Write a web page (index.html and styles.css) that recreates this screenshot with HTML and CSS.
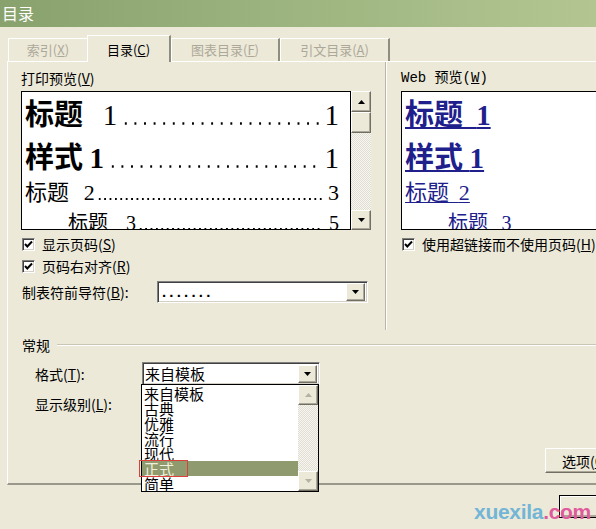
FILE: index.html
```html
<!DOCTYPE html>
<html lang="zh-CN">
<head>
<meta charset="utf-8">
<title>目录</title>
<link rel="stylesheet" href="styles.css">
</head>
<body>
<div class="titlebar">目录</div>
<div class="tabs">
  <div class="tab tab-off w1">索引(<u>X</u>)</div>
  <div class="tab tab-on">目录(<u>C</u>)</div>
  <div class="tab tab-off w3">图表目录(<u>F</u>)</div>
  <div class="tab tab-off w4">引文目录(<u>A</u>)</div>
</div>
<div class="panel">
  <div class="top">
    <div class="col-left">
      <div class="label">打印预览(<u>V</u>)</div>
      <div class="preview-row">
        <div class="preview">
          <div class="trow r1"><span class="h bold">标题&nbsp;&nbsp;&nbsp;<span class="num">1</span></span><span class="dots wide"></span><span class="pg">1</span></div>
          <div class="trow r2"><span class="h bold">样式&nbsp;<span class="num">1</span></span><span class="dots wide"></span><span class="pg">1</span></div>
          <div class="trow r3"><span class="h">标题&nbsp;&nbsp;&nbsp;<span class="num">2</span></span><span class="dots fine"></span><span class="pg">3</span></div>
          <div class="trow r4"><span class="h">标题&nbsp;&nbsp;&nbsp;&nbsp;<span class="num">3</span></span><span class="dots fine"></span><span class="pg">5</span></div>
        </div>
        <div class="vscroll">
          <div class="sbtn"><svg width="7" height="4" viewBox="0 0 7 4"><polygon points="0,4 7,4 3.5,0" fill="#000"/></svg></div>
          <div class="sthumb"></div>
          <div class="strack"></div>
          <div class="sbtn"><svg width="7" height="4" viewBox="0 0 7 4"><polygon points="0,0 7,0 3.5,4" fill="#000"/></svg></div>
        </div>
      </div>
      <div class="checks">
        <div class="check"><span class="box"><svg width="11" height="11" viewBox="0 0 11 11"><polyline points="2,5 4.3,7.5 9,2.5" fill="none" stroke="#000" stroke-width="2"/></svg></span><span class="ctext">显示页码(<u>S</u>)</span></div>
        <div class="check"><span class="box"><svg width="11" height="11" viewBox="0 0 11 11"><polyline points="2,5 4.3,7.5 9,2.5" fill="none" stroke="#000" stroke-width="2"/></svg></span><span class="ctext">页码右对齐(<u>R</u>)</span></div>
      </div>
      <div class="field-row">
        <span class="field-label">制表符前导符(<u>B</u>):</span>
        <div class="combo leader">
          <span class="ctext-val leader-dots">.......</span>
          <span class="dropbtn"><svg width="7" height="4" viewBox="0 0 7 4"><polygon points="0,0 7,0 3.5,4" fill="#000"/></svg></span>
        </div>
      </div>
    </div>
    <div class="vsep"></div>
    <div class="col-right">
      <div class="label mono">Web 预览(<u>W</u>)</div>
      <div class="preview web">
        <div class="wrow r1"><a class="wl bold">标题&nbsp;&nbsp;<span class="num">1</span></a></div>
        <div class="wrow r2"><a class="wl bold">样式&nbsp;<span class="num">1</span></a></div>
        <div class="wrow r3"><a class="wl">标题&nbsp;&nbsp;<span class="num">2</span></a></div>
        <div class="wrow r4"><a class="wl">标题&nbsp;&nbsp;&nbsp;<span class="num">3</span></a></div>
      </div>
      <div class="checks">
        <div class="check"><span class="box"><svg width="11" height="11" viewBox="0 0 11 11"><polyline points="2,5 4.3,7.5 9,2.5" fill="none" stroke="#000" stroke-width="2"/></svg></span><span class="ctext nowrap">使用超链接而不使用页码(<u>H</u>)</span></div>
      </div>
    </div>
  </div>
  <div class="group">
    <div class="group-head"><span class="gtitle">常规</span><span class="etch"></span></div>
    <div class="g-row">
      <span class="g-label">格式(<u>T</u>):</span>
      <div class="combo fmt">
        <span class="ctext-val">来自模板</span>
        <span class="dropbtn"><svg width="7" height="4" viewBox="0 0 7 4"><polygon points="0,0 7,0 3.5,4" fill="#000"/></svg></span>
        <div class="dropdown">
          <div class="items">
            <div class="item">来自模板</div>
            <div class="item">古典</div>
            <div class="item">优雅</div>
            <div class="item">流行</div>
            <div class="item">现代</div>
            <div class="item sel">正式<span class="mark"></span></div>
            <div class="item">简单</div>
          </div>
          <div class="vscroll small">
            <div class="sbtn"><svg width="7" height="4" viewBox="0 0 7 4"><polygon points="0,4 7,4 3.5,0" fill="#b5b2a4"/></svg></div>
            <div class="strack"></div>
            <div class="sbtn"><svg width="7" height="4" viewBox="0 0 7 4"><polygon points="0,0 7,0 3.5,4" fill="#b5b2a4"/></svg></div>
          </div>
        </div>
      </div>
    </div>
    <div class="g-row">
      <span class="g-label">显示级别(<u>L</u>):</span>
    </div>
    <div class="opt-row"><button class="btn opt">选项(<u>O</u>)...</button></div>
  </div>
</div>
<div class="bottom-row"><button class="btn default">确定</button></div>
<div class="watermark">xuexila<span class="com">.com</span></div>
</body>
</html>
```

FILE: styles.css
```css
* { box-sizing: border-box; }
html, body { margin: 0; padding: 0; }
body {
  width: 596px;
  height: 529px;
  overflow: hidden;
  position: relative;
  background: #ece9d8;
  font-family: "Noto Sans CJK SC", sans-serif;
  font-size: 14px;
  color: #000;
}
u { text-decoration: underline; text-underline-offset: 1px; }

.titlebar {
  height: 27px;
  background: linear-gradient(90deg, #89a26d 0%, #9bb37e 45%, #b3c692 100%);
  color: #fff;
  font-size: 16px;
  line-height: 27px;
  padding-left: 2px;
}

.tabs {
  display: flex;
  align-items: flex-end;
  height: 34px;
  padding-left: 8px;
}
.tab {
  height: 23px;
  border-top: 1px solid #fff;
  border-left: 1px solid #fff;
  border-right: 2px solid #8f8d7f;
  font-size: 13px;
  line-height: 22px;
  text-align: center;
  white-space: nowrap;
}
.tab-off { color: #aca899; }
.w1 { width: 79px; border-right: none; }
.w3 { width: 109px; }
.w4 { width: 110px; }
.tab-on {
  position: relative;
  z-index: 1;
  width: 84px;
  height: 27px;
  margin-bottom: -1px;
  background: #ece9d8;
  padding-top: 2px;
  line-height: 24px;
}

.panel {
  margin-left: 7px;
  width: 640px;
  height: 424px;
  border-top: 1px solid #fff;
  border-left: 1px solid #fff;
  border-bottom: 2px solid #9a988a;
  padding: 8px 0 0 13px;
}

.top { display: flex; height: 260px; }
.col-left { width: 351px; }
.label { height: 21px; line-height: 16px; white-space: nowrap; }
.mono { font-family: "Liberation Mono", "Noto Sans CJK SC", monospace; }

.preview-row { display: flex; height: 139px; }
.preview {
  width: 330px;
  height: 139px;
  background: #fff;
  border: 1px solid #000;
  overflow: hidden;
  padding: 0 11px 0 3px;
}
.preview.web { width: 230px; }

.trow { display: flex; align-items: baseline; white-space: nowrap; }
.wrow { white-space: nowrap; }
.r1 { height: 41px; line-height: 41px; font-size: 29px; }
.r2 { height: 44px; line-height: 44px; font-size: 29px; }
.r3 { height: 27px; line-height: 27px; font-size: 22px; }
.r4 { height: 36px; line-height: 36px; font-size: 20px; padding-left: 43px; }
.bold { font-weight: 700; }
.num, .pg { font-family: "Liberation Serif", serif; }
.r1 .h .num { font-weight: 400; }
.pg { font-weight: 400; }
.dots { flex: 1; height: 3px; margin: 0 6px 0 4px; }
.dots.wide { background: radial-gradient(circle, #000 0 1px, transparent 1.4px) left bottom / 9.6px 3px repeat-x; }
.dots.fine { background: radial-gradient(circle, #000 0 0.8px, transparent 1.2px) left bottom / 5.4px 2px repeat-x; height: 2px; margin-left: 2px; }

.wl { color: #20208c; text-decoration: underline; text-decoration-thickness: 1.5px; text-underline-offset: 2px; }
.r3 .wl, .r4 .wl { text-decoration-thickness: 1px; }

.vscroll { width: 20px; display: flex; flex-direction: column; }
.sbtn, .sthumb, .dropbtn {
  background: #ece9d8;
  border: 1px solid;
  border-color: #fff #716f64 #716f64 #fff;
  box-shadow: inset -1px -1px 0 #aca899;
}
.sbtn { height: 21px; display: flex; align-items: center; justify-content: center; }
.sbtn:last-child { height: 20px; }
.sthumb { height: 21px; }
.strack {
  flex: 1;
  background: repeating-conic-gradient(#f6f5ef 0 25%, #e1dfd3 0 50%) 0 0 / 2px 2px;
}

.checks { margin-top: 3px; }
.check { display: flex; align-items: center; height: 22px; padding-left: 1px; }
.box {
  width: 13px;
  height: 13px;
  background: #fff;
  border: 1px solid;
  border-color: #7f7f7f #fff #fff #7f7f7f;
  box-shadow: inset 1px 1px 0 #404040, inset -1px -1px 0 #d4d0c8;
  display: flex;
  align-items: center;
  justify-content: center;
}
.ctext { margin-left: 7px; line-height: 16px; }
.nowrap { white-space: nowrap; }

.field-row { display: flex; align-items: center; height: 22px; margin-top: 4px; }
.field-label { width: 136px; padding-left: 1px; white-space: nowrap; }

.combo {
  position: relative;
  display: flex;
  align-items: center;
  background: #fff;
  border: 1px solid;
  border-color: #808080 #fff #fff #808080;
  box-shadow: inset 1px 1px 0 #404040, inset -1px -1px 0 #d4d0c8;
}
.combo.leader { width: 211px; height: 22px; }
.combo.fmt { width: 178px; height: 23px; }
.ctext-val { flex: 1; padding-left: 3px; white-space: nowrap; }
.fmt .ctext-val { font-size: 15px; padding-left: 2px; }
.leader-dots { font-family: "Liberation Sans", sans-serif; font-weight: 700; font-size: 15px; letter-spacing: 3.2px; padding-left: 4px; line-height: 14px; }
.dropbtn {
  width: 19px;
  height: 18px;
  margin-right: 2px;
  display: flex;
  align-items: center;
  justify-content: center;
}

.vsep {
  width: 2px;
  margin: -8px 0 0 13px;
  border-left: 1px solid #b9b6a6;
  border-right: 1px solid #fff;
}
.col-right { margin-left: 14px; }

.group-head { display: flex; align-items: center; height: 16px; margin-top: 7px; }
.gtitle { padding-left: 1px; line-height: 16px; }
.etch { flex: 1; height: 2px; margin-left: 7px; border-top: 1px solid #c9c6b6; border-bottom: 1px solid #fff; }

.g-row { display: flex; align-items: center; height: 23px; margin-top: 9px; }
.g-row + .g-row { margin-top: 7px; }
.g-label { width: 121px; padding-left: 14px; white-space: nowrap; }

.dropdown {
  position: absolute;
  left: -2px;
  top: 21px;
  width: 178px;
  height: 108px;
  z-index: 2;
  display: flex;
  background: #fff;
  border: 1px solid #000;
}
.items { flex: 1; padding-top: 1px; }
.item {
  height: 15px;
  line-height: 15px;
  font-size: 15px;
  padding-left: 2px;
  white-space: nowrap;
}
.item.sel { position: relative; background: #8f9b6f; color: #f3efdd; }
.mark {
  position: absolute;
  left: -3px;
  top: -1px;
  width: 49px;
  height: 17px;
  border: 1px solid #d8413c;
}
.vscroll.small .sbtn { height: 20px; }

.opt-row { margin-top: 33px; }
.btn {
  font-family: "Noto Sans CJK SC", sans-serif;
  font-size: 14px;
  color: #000;
  background: #ece9d8;
  border: 1px solid;
  border-color: #fff #716f64 #716f64 #fff;
  box-shadow: inset -1px -1px 0 #aca899;
  padding: 0;
}
.btn.opt {
  margin-left: 524px;
  width: 90px;
  height: 25px;
  text-align: left;
  padding-left: 16px;
}
.bottom-row { margin-top: 10px; }
.btn.default {
  margin-left: 559px;
  width: 110px;
  height: 23px;
  border: 1px solid #000;
  box-shadow: inset 1px 1px 0 #fff, inset -2px -2px 0 #aca899;
}

.watermark {
  position: absolute;
  left: 474px;
  top: 500px;
  font-family: "Liberation Sans", sans-serif;
  font-weight: 700;
  font-size: 21px;
  color: #72b5d6;
  letter-spacing: -0.3px;
}
.watermark .com { color: #df5a9c; }
```
